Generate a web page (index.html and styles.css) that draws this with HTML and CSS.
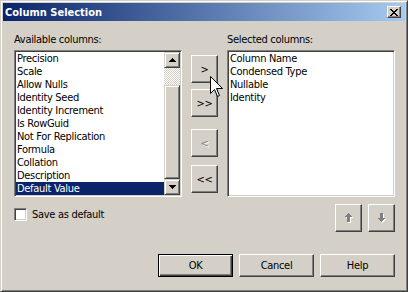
FILE: index.html
```html
<!DOCTYPE html>
<html>
<head>
	<meta charset="utf-8"/>
	<title>Column Selection</title>
	<link rel="stylesheet" href="styles.css">
</head>
<body>
<div class="window">
	<div class="titlebar">
		<span class="title">Column Selection</span>
		<button class="close">
			<svg width="8" height="7" viewBox="0 0 8 7" shape-rendering="crispEdges"><path d="M0 0h2v1h-2zM6 0h2v1h-2zM1 1h2v1h-2zM5 1h2v1h-2zM2 2h4v1h-4zM3 3h2v1h-2zM2 4h4v1h-4zM1 5h2v1h-2zM5 5h2v1h-2zM0 6h2v1h-2zM6 6h2v1h-2z" fill="#000"/></svg>
		</button>
	</div>

	<div class="content">
		<div class="lists">
			<div class="col">
				<div class="label">Available columns:</div>
				<div class="listbox">
					<ul class="items">
						<li>Precision</li>
						<li>Scale</li>
						<li>Allow Nulls</li>
						<li>Identity Seed</li>
						<li>Identity Increment</li>
						<li>Is RowGuid</li>
						<li>Not For Replication</li>
						<li>Formula</li>
						<li>Collation</li>
						<li>Description</li>
						<li class="selected">Default Value</li>
					</ul>
					<div class="scrollbar">
						<div class="sb-btn">
							<svg width="7" height="4" viewBox="0 0 7 4" shape-rendering="crispEdges"><path d="M3 0h1v1h-1zM2 1h3v1h-3zM1 2h5v1h-5zM0 3h7v1h-7z" fill="#000"/></svg>
						</div>
						<div class="track"></div>
						<div class="thumb"></div>
						<div class="sb-btn">
							<svg width="7" height="4" viewBox="0 0 7 4" shape-rendering="crispEdges"><path d="M0 0h7v1h-7zM1 1h5v1h-5zM2 2h3v1h-3zM3 3h1v1h-1z" fill="#000"/></svg>
						</div>
					</div>
				</div>
			</div>

			<div class="movers">
				<button class="btn move">&gt;</button>
				<button class="btn move all">&gt;&gt;</button>
				<button class="btn move back disabled">&lt;</button>
				<button class="btn move">&lt;&lt;</button>
			</div>

			<div class="col">
				<div class="label">Selected columns:</div>
				<div class="listbox">
					<ul class="items">
						<li>Column Name</li>
						<li>Condensed Type</li>
						<li>Nullable</li>
						<li>Identity</li>
					</ul>
				</div>
			</div>
		</div>

		<div class="options">
			<label class="check"><span class="box"></span>Save as default</label>
			<div class="order">
				<button class="btn move">
					<svg width="8" height="10" viewBox="0 0 8 10" shape-rendering="crispEdges">
						<path d="M4 1h1v1h-1zM3 2h3v1h-3zM2 3h5v1h-5zM1 4h7v1h-7zM3 5h3v5h-3z" fill="#fff"/>
						<path d="M3 0h1v1h-1zM2 1h3v1h-3zM1 2h5v1h-5zM0 3h7v1h-7zM2 4h3v5h-3z" fill="#808080"/>
					</svg>
				</button>
				<button class="btn move">
					<svg width="8" height="10" viewBox="0 0 8 10" shape-rendering="crispEdges">
						<path d="M3 1h3v5h-3zM1 6h7v1h-7zM2 7h5v1h-5zM3 8h3v1h-3zM4 9h1v1h-1z" fill="#fff"/>
						<path d="M2 0h3v5h-3zM0 5h7v1h-7zM1 6h5v1h-5zM2 7h3v1h-3zM3 8h1v1h-1z" fill="#808080"/>
					</svg>
				</button>
			</div>
		</div>

		<div class="actions">
			<button class="btn action default">OK</button>
			<button class="btn action">Cancel</button>
			<button class="btn action">Help</button>
		</div>
	</div>

	<svg class="cursor" width="13" height="21" viewBox="0 0 13 21">
		<path d="M0.5 0.5V17.5L4.5 13.5L7.5 20.5L9.5 19.5L6.5 12.5H12.5Z" fill="#fff" stroke="#000" stroke-width="1"/>
	</svg>
</div>
</body>
</html>
```

FILE: styles.css
```css
body{
	margin: 0px;
	background-color: #d4d0c8;
	font-family: "DejaVu Sans Condensed", "DejaVu Sans", sans-serif;
	font-size: 11px;
	letter-spacing: -0.3px;
	color: #000;
}

.window{
	position: relative;
	width: 408px;
	height: 292px;
	box-sizing: border-box;
	border: 1px solid;
	border-color: #d4d0c8 #404040 #404040 #d4d0c8;
	box-shadow: inset 1px 1px #fff, inset -1px -1px #808080;
	padding: 2px;
	display: flex;
	flex-direction: column;
	background-color: #d4d0c8;
}

/* title bar */
.titlebar{
	height: 18px;
	display: flex;
	align-items: center;
	justify-content: space-between;
	padding: 0 4px 0 2px;
	background: linear-gradient(to right, #0a246a, #a6caf0);
	color: #fff;
	font-weight: bold;
	letter-spacing: 0;
}
.close{
	width: 14px;
	height: 12px;
	padding: 0;
	display: flex;
	align-items: center;
	justify-content: center;
	background-color: #d4d0c8;
	border: 1px solid;
	border-color: #fff #404040 #404040 #fff;
	box-shadow: inset -1px -1px #808080;
}

.content{
	flex: 1;
	padding: 12px 10px 0 11px;
}

/* the two lists and the buttons between them */
.lists{
	display: grid;
	grid-template-columns: 168px 27px 168px;
	column-gap: 9px;
}
.col{
	display: flex;
	flex-direction: column;
}
.label{
	height: 13px;
	line-height: 13px;
	margin-bottom: 4px;
}
.listbox{
	height: 147px;
	box-sizing: border-box;
	border: 1px solid;
	border-color: #808080 #fff #fff #808080;
	box-shadow: inset 1px 1px #404040, inset -1px -1px #d4d0c8;
	padding: 1px;
	display: flex;
	background-color: #fff;
}
.items{
	flex: 1;
	list-style: none;
	margin: 0;
	padding: 0;
}
.items li{
	height: 13px;
	line-height: 13px;
	padding-left: 1px;
	white-space: nowrap;
}
.items li.selected{
	background-color: #0a246a;
	color: #fff;
}

.scrollbar{
	width: 16px;
	display: flex;
	flex-direction: column;
}
.sb-btn, .thumb{
	box-sizing: border-box;
	background-color: #d4d0c8;
	border: 1px solid;
	border-color: #d4d0c8 #404040 #404040 #d4d0c8;
	box-shadow: inset 1px 1px #fff, inset -1px -1px #808080;
}
.sb-btn{
	height: 16px;
	display: flex;
	align-items: center;
	justify-content: center;
}
.track{
	height: 17px;
	background: repeating-conic-gradient(#fff 0 25%, #d4d0c8 0 50%) 0 0/2px 2px;
}
.thumb{
	flex: 1;
}

/* buttons */
.btn{
	font: inherit;
	letter-spacing: inherit;
	color: #000;
	padding: 0;
	background-color: #d4d0c8;
	border: 1px solid;
	border-color: #fff #404040 #404040 #fff;
	box-shadow: inset -1px -1px #808080;
	display: flex;
	align-items: center;
	justify-content: center;
}
.btn.disabled{
	color: #808080;
	text-shadow: 1px 1px #fff;
}
.movers{
	display: flex;
	flex-direction: column;
	padding-top: 22px;
}
.move{
	width: 27px;
	height: 28px;
}
.move.all{
	margin-top: 6px;
}
.move.back{
	margin-top: 12px;
}
.move.back + .move{
	margin-top: 8px;
}

/* checkbox row */
.options{
	margin-top: 7px;
	height: 28px;
	display: flex;
	justify-content: space-between;
}
.check{
	display: flex;
	align-items: center;
	height: 13px;
	margin-top: 4px;
	gap: 5px;
}
.box{
	width: 13px;
	height: 13px;
	box-sizing: border-box;
	border: 1px solid;
	border-color: #808080 #fff #fff #808080;
	box-shadow: inset 1px 1px #404040, inset -1px -1px #d4d0c8;
	background-color: #fff;
}
.order{
	display: flex;
	gap: 6px;
}

/* dialog buttons */
.actions{
	margin-top: 22px;
	display: flex;
	justify-content: flex-end;
	gap: 6px;
}
.action{
	width: 75px;
	height: 23px;
}
.action.default{
	border-color: #000;
	box-shadow: inset 1px 1px #fff, inset -1px -1px #404040, inset -2px -2px #808080;
}

.cursor{
	position: absolute;
	left: 209px;
	top: 75px;
}
```
